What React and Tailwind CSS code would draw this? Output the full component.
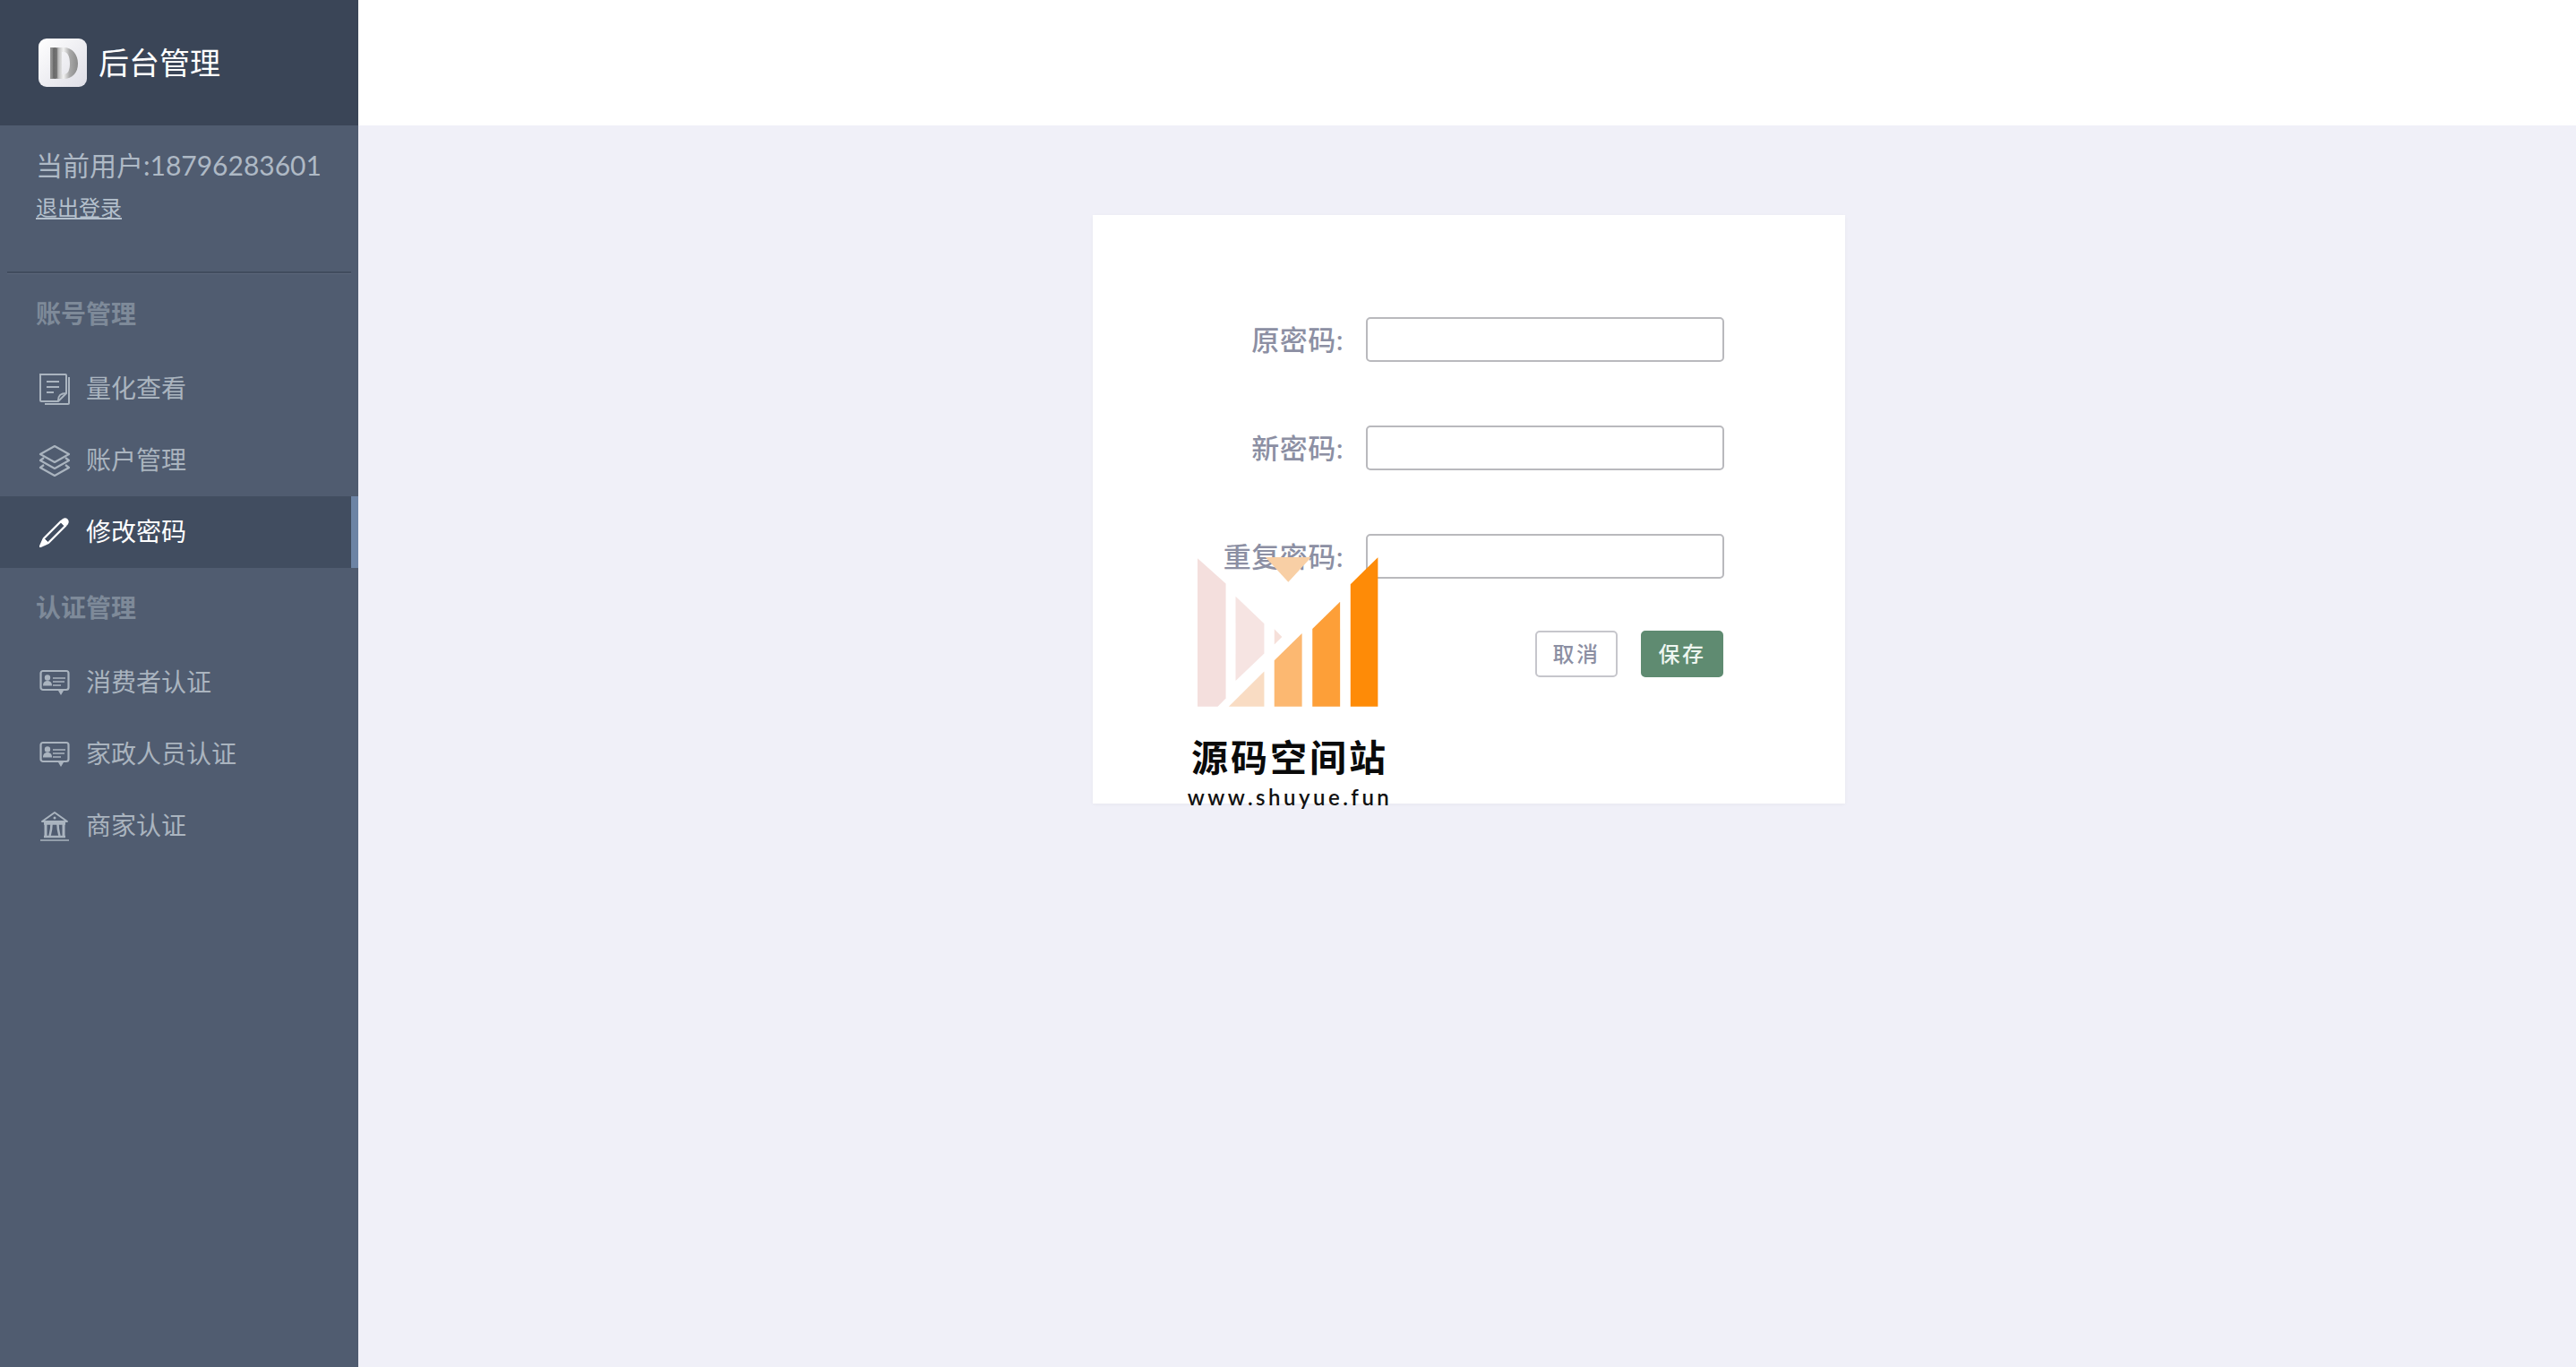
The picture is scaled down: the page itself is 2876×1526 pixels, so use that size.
const LogoMark = () => (
  <svg viewBox="0 0 54 54" className="w-[54px] h-[54px]">
    <defs>
      <linearGradient id="logoBg" x1="0" y1="0" x2="1" y2="1">
        <stop offset="0" stopColor="#ffffff" />
        <stop offset="1" stopColor="#dedee6" />
      </linearGradient>
      <linearGradient id="logoD" x1="0" y1="0" x2="1" y2="0">
        <stop offset="0" stopColor="#9a9a9a" />
        <stop offset="0.18" stopColor="#6f6f6f" />
        <stop offset="0.32" stopColor="#c4c4c4" />
        <stop offset="0.48" stopColor="#f2f2f2" />
        <stop offset="0.7" stopColor="#a8a8a8" />
        <stop offset="1" stopColor="#8a8a8a" />
      </linearGradient>
    </defs>
    <rect width="54" height="54" rx="9" fill="url(#logoBg)" />
    <path d="M13 10H28C38 10 44 18 44 28S38 45 28 45H13zM26 15V40H28C33 40 35 35 35 28S33 15 28 15z" fill="url(#logoD)" fillRule="evenodd" />
    <path d="M17 11V44M20 11V44" stroke="#5f5f5f" strokeWidth="1" />
  </svg>
);

const NoteIcon = () => (
  <svg viewBox="0 0 38 38" className="w-[38px] h-[38px]" fill="none" stroke="currentColor" strokeWidth="2">
    <path d="M3 3h28a1 1 0 0 1 1 1v20l-9 9H4a1 1 0 0 1-1-1z" />
    <path d="M35 6v29a1 1 0 0 1-1 1H8" />
    <path d="M10 11h14M10 17h14M10 23h8M23 32c0-6 3-8 9-8" />
  </svg>
);

const LayersIcon = () => (
  <svg viewBox="0 0 38 36" className="w-[38px] h-[36px]" fill="none" stroke="currentColor" strokeWidth="2.200" strokeLinejoin="round">
    <path d="M19 2 35 11 19 20 3 11z" />
    <path d="M7 15 3 18l16 9 16-9-4-3" />
    <path d="M7 23l-4 3 16 9 16-9-4-3" />
  </svg>
);

const PenIcon = () => (
  <svg viewBox="0 0 34 34" className="w-[34px] h-[34px]" fill="none" stroke="currentColor" strokeLinejoin="round">
    <path d="M1 33l4-9L24 5l5 5L10 29z" strokeWidth="2.400" />
    <path d="M24 5c2-3 5-4 7-2s1 5-2 7z" fill="currentColor" strokeWidth="1.500" />
    <path d="M1 33l4-9 5 5z" fill="currentColor" strokeWidth="1" />
  </svg>
);

const IdCardIcon = () => (
  <svg viewBox="0 0 34 30" className="w-[34px] h-[30px]" fill="none" stroke="currentColor" strokeWidth="2.200">
    <rect x="1.500" y="2" width="31" height="21" rx="2.500" />
    <circle cx="9" cy="9.500" r="3.200" fill="currentColor" stroke="none" />
    <path d="M4 18.500c0-4 2-5.500 5-5.500s5 1.500 5 5.500z" fill="currentColor" stroke="none" />
    <path d="M15 10h14M15 14h13M15 18h9" strokeWidth="1.300" />
    <path d="M21 24h6l-3 5z" fill="currentColor" stroke="none" />
  </svg>
);

const BankIcon = () => (
  <svg viewBox="0 0 34 34" className="w-[34px] h-[34px]" fill="none" stroke="currentColor" strokeWidth="2">
    <path d="M3 12 17 2l14 10z" strokeLinejoin="round" />
    <circle cx="17" cy="8" r="1.500" fill="currentColor" stroke="none" />
    <path d="M5 14h24" strokeWidth="3.500" />
    <path d="M7 15v13M27 15v13" strokeWidth="3" />
    <path d="M13.500 15c0 6-1 9-2 13M20.500 15c0 6 1 9 2 13" strokeWidth="2.500" />
    <path d="M5 29h24" strokeWidth="2.500" />
    <path d="M1 33h32" strokeWidth="1.500" />
  </svg>
);

const menuGroups = [
  {
    title: "账号管理",
    items: [
      { label: "量化查看", icon: <NoteIcon /> },
      { label: "账户管理", icon: <LayersIcon /> },
      { label: "修改密码", icon: <PenIcon />, active: true },
    ],
  },
  {
    title: "认证管理",
    items: [
      { label: "消费者认证", icon: <IdCardIcon /> },
      { label: "家政人员认证", icon: <IdCardIcon /> },
      { label: "商家认证", icon: <BankIcon /> },
    ],
  },
];

const Sidebar = () => (
  <aside className="w-[400px] shrink-0 bg-[#505c70] flex flex-col">
    <div className="h-[140px] bg-[#3a4557] flex items-center pl-[43px]">
      <LogoMark />
      <span className="ml-[13px] text-[34px] leading-none text-white">后台管理</span>
    </div>

    <div className="h-[163px] pt-[22px] pl-[40px]">
      <p className="text-[30px] leading-[44px] text-[#aeb9c5]">当前用户:18796283601</p>
      <a className="block mt-[8px] w-fit text-[24px] leading-[36px] text-[#b4c0cc] underline">退出登录</a>
    </div>

    <div className="mx-[8px] h-[3px] bg-[#414c5e] border-b border-[#5a6679]" />

    {menuGroups.map((group) => (
      <div key={group.title}>
        <h3 className="h-[88px] pl-[40px] flex items-center text-[28px] font-bold text-[#7e8a99]">{group.title}</h3>
        {group.items.map((item) => (
          <div
            key={item.label}
            className={`relative h-[80px] pl-[41px] flex items-center ${
              item.active ? "bg-[#414d60] text-white" : "text-[#aab4bf]"
            }`}
          >
            <span className="w-[40px] mr-[15px] -mt-[1px] flex items-center justify-center">{item.icon}</span>
            <span className="text-[28px] leading-none -mt-[2px]">{item.label}</span>
            {item.active && <span className="absolute right-0 top-0 bottom-0 w-[8px] bg-[#6d84a5]" />}
          </div>
        ))}
      </div>
    ))}
  </aside>
);

const FormRow = ({ label }) => (
  <div className="flex items-center">
    <label className="w-[305px] pr-[25px] text-right text-[31px] leading-none font-medium tracking-[0.500px] text-[#8c8fa3]">{label}:</label>
    <input type="password" className="w-[400px] h-[50px] bg-white border-2 border-[#b9b9bd] rounded-[5px]" />
  </div>
);

const Watermark = () => (
  <div className="absolute left-[70px] top-[350px] w-[300px] flex flex-col items-center pointer-events-none">
    <svg viewBox="0 0 900 620" className="w-[300px] h-[206px]">
      <path d="M140 100 235 185V570L208 598H140z" fill="#f4dfdd" />
      <path d="M268 228 364 320V420L268 512z" fill="#f6e4e2" />
      <path d="M398 338 424 364 398 390z" fill="#f6e0da" />
      <path d="M245 598 364 480V598z" fill="#f9dcc3" />
      <path d="M398 443 491 352V598H398z" fill="#fcb871" />
      <path d="M526 337 619 246V598H526z" fill="#fd9f38" />
      <path d="M654 187 746 97V598H654z" fill="#fe8b07" />
      <path d="M368 96H522L445 180z" fill="#f8cfa5" />
    </svg>
    <span className="mt-[25px] text-[41px] leading-[50px] font-bold tracking-[3px] text-[#0a0a0a]">源码空间站</span>
    <span className="mt-[4px] text-[24px] leading-[30px] font-semibold tracking-[3.500px] text-[#111]">www.shuyue.fun</span>
  </div>
);

const PasswordCard = () => (
  <div className="relative w-[840px] h-[657px] bg-white pt-[114px] shadow-[0_1px_4px_rgba(0,0,0,0.04)]">
    <div className="flex flex-col gap-[71px]">
      <FormRow label="原密码" />
      <FormRow label="新密码" />
      <FormRow label="重复密码" />
    </div>
    <div className="mt-[58px] pl-[494px] flex gap-[26px]">
      <button className="w-[92px] h-[52px] bg-white border-2 border-[#c6c6cc] rounded-[5px] text-[24px] font-medium tracking-[2.500px] text-[#8c8fa3]">取消</button>
      <button className="w-[92px] h-[52px] bg-[#5f8b71] border-2 border-[#5f8b71] rounded-[5px] text-[24px] font-medium tracking-[2.500px] text-[#eef6f0]">保存</button>
    </div>
    <Watermark />
  </div>
);

export default function App() {
  return (
    <div className="flex h-screen overflow-hidden font-['Lato','Noto_Sans_CJK_SC',sans-serif]">
      <Sidebar />
      <main className="flex-1 flex flex-col bg-[#f0f0f8]">
        <div className="h-[140px] bg-white" />
        <div className="flex-1 flex justify-center pt-[100px] pl-[4px]">
          <PasswordCard />
        </div>
      </main>
    </div>
  );
}
